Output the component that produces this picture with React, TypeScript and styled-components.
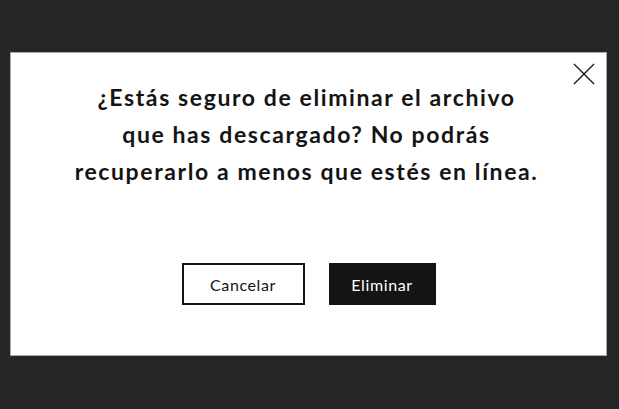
import React from "react";
import styled, { createGlobalStyle } from "styled-components";

const Global = createGlobalStyle`
  html, body { margin: 0; padding: 0; background: #262626; }
  body { font-family: "Lato", sans-serif; }
`;

const Page = styled.div`
  width: 619px;
  height: 409px;
  background: #262626;
  padding: 52px 0 0 10px;
  box-sizing: border-box;
`;

const Dialog = styled.div`
  position: relative;
  width: 597px;
  height: 304px;
  box-sizing: border-box;
  background: #ffffff;
  border: 1px solid #a8a8a8;
  display: flex;
  flex-direction: column;
  align-items: center;
  padding-top: 26px;
`;

const Close = styled.button`
  position: absolute;
  top: 9px;
  right: 10px;
  width: 24px;
  height: 24px;
  padding: 0;
  border: none;
  background: transparent;
  display: flex;
  align-items: center;
  justify-content: center;
  cursor: pointer;
`;

const Message = styled.p`
  margin: 0;
  font-family: "Lato", sans-serif;
  font-weight: 700;
  font-size: 23px;
  line-height: 37px;
  letter-spacing: 1.6px;
  color: #141414;
  text-align: center;
  margin-left: -4px;
`;

const Actions = styled.div`
  display: flex;
  gap: 24px;
  margin-top: 73px;
`;

const Button = styled.button<{ $primary?: boolean }>`
  height: 42px;
  box-sizing: border-box;
  padding: 0;
  width: ${(p) => (p.$primary ? "107px" : "123px")};
  font-family: "Lato", sans-serif;
  font-size: 16px;
  font-weight: 400;
  letter-spacing: 0.6px;
  color: ${(p) => (p.$primary ? "#ffffff" : "#141414")};
  background: ${(p) => (p.$primary ? "#141414" : "#ffffff")};
  border: 2px solid #141414;
  cursor: pointer;
`;

export default function App() {
  return (
    <>
      <Global />
      <Page>
        <Dialog>
          <Close aria-label="Cerrar">
            <svg width="22" height="22" viewBox="0 0 22 22">
              <path d="M1 1 L21 21 M21 1 L1 21" stroke="#141414" strokeWidth="1.3" />
            </svg>
          </Close>
          <Message>
            ¿Estás seguro de eliminar el archivo
            <br />
            que has descargado? No podrás
            <br />
            recuperarlo a menos que estés en línea.
          </Message>
          <Actions>
            <Button>Cancelar</Button>
            <Button $primary>Eliminar</Button>
          </Actions>
        </Dialog>
      </Page>
    </>
  );
}
